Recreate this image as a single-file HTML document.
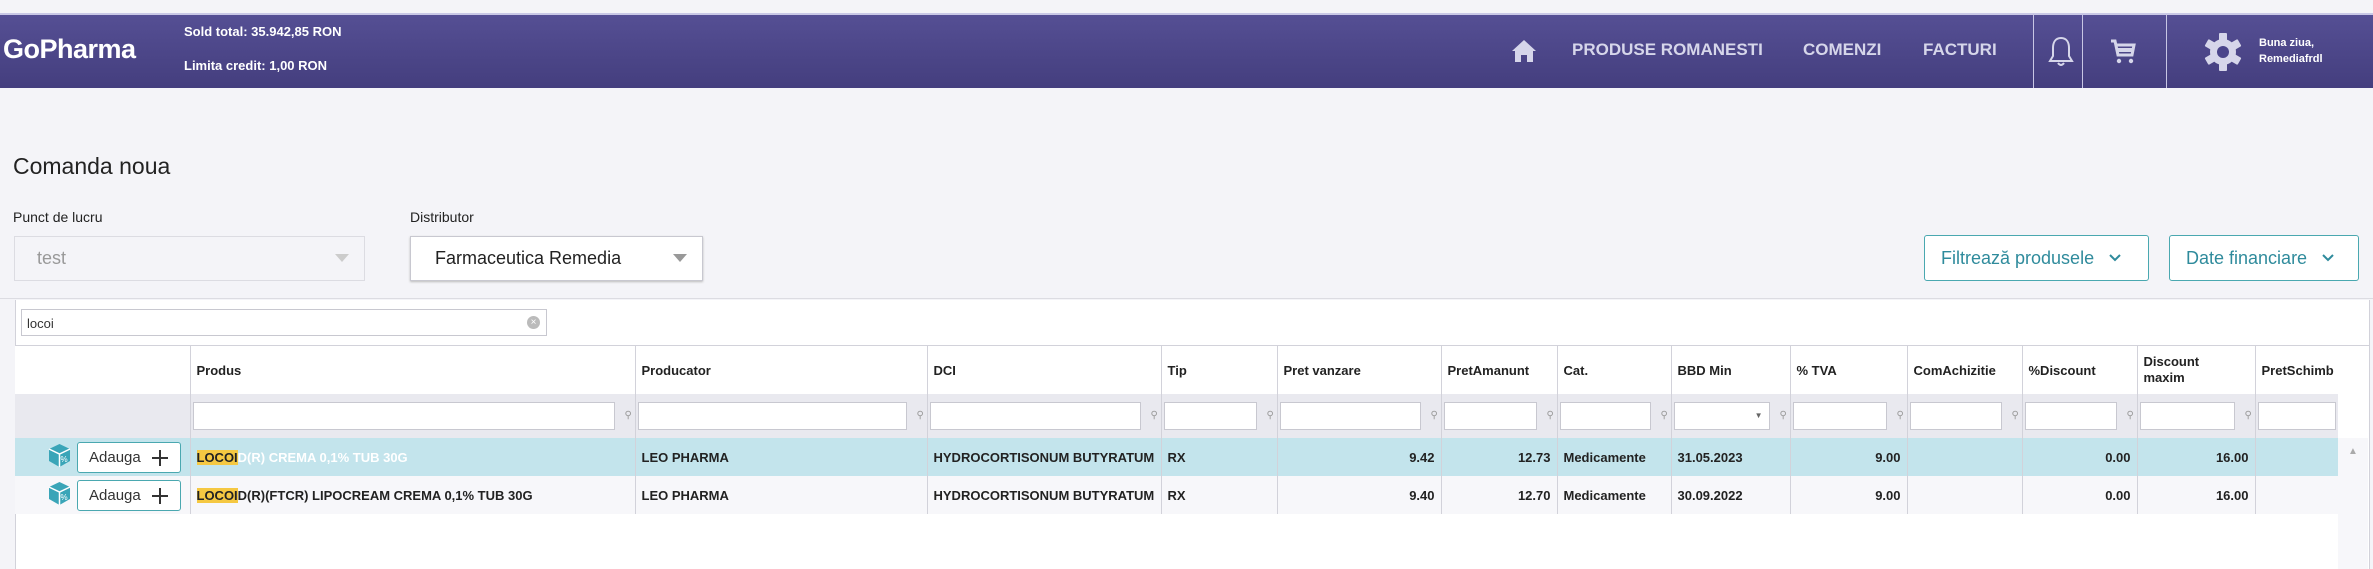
<!DOCTYPE html>
<html><head><meta charset="utf-8"><style>
*{box-sizing:border-box;margin:0;padding:0}
body{width:2373px;height:569px;overflow:hidden;background:#f4f4f8;font-family:"Liberation Sans",Arial,sans-serif;position:relative}
.a{position:absolute}
.hdr{left:0;top:13px;width:2373px;height:75px;background:linear-gradient(#554f94,#443e7e);border-top:2px solid #c9c8e6}
.nav{color:#d6d6ea;font-size:17px;font-weight:bold;top:40px}
.sep{top:13px;width:1px;height:75px;background:#c8c6e4}
.btn{border:1.5px solid #4aa8b0;background:#fff;border-radius:3px;color:#2f8b9c;font-size:18px;display:flex;align-items:center;padding-left:16px}
table{border-collapse:collapse;table-layout:fixed;font-size:13px;font-weight:bold;color:#222}
td{border-left:1px solid #d2d2da;padding:0 6px;white-space:nowrap;overflow:hidden}
td:first-child{border-left:none}
tr.h td{height:48px;background:#fff;font-size:13px}
tr.f td{height:44px;background:#e9e9ef;padding:0 2px;position:relative}
.inp{height:28px;width:calc(100% - 18px);background:#fff;border:1px solid #c8c8d0}
.pin{position:absolute;right:5px;top:16px;width:5px;height:10px;color:#999;font-size:10px;font-weight:normal}
tr.r td{height:38px}
tr.r1 td{background:#c3e4ec}
tr.r2 td{background:#f7f7fa}
.n{text-align:right}
.hl{background:#f5c842}
</style></head><body>
<div class="a hdr"></div>
<div class="a" style="left:3px;top:34px;font-size:27px;font-weight:bold;color:#fff;letter-spacing:-0.5px">GoPharma</div>
<div class="a" style="left:184px;top:24px;font-size:13px;font-weight:bold;color:#fff">Sold total: 35.942,85 RON</div>
<div class="a" style="left:184px;top:58px;font-size:13px;font-weight:bold;color:#fff">Limita credit: 1,00 RON</div>
<svg class="a" style="left:1512px;top:40px" width="24" height="22" viewBox="0 0 24 22"><path d="M12 0 L24 11 L21 11 L21 22 L15 22 L15 15 L9 15 L9 22 L3 22 L3 11 L0 11 Z" fill="#d6d6ea"/></svg>
<div class="a nav" style="left:1572px">PRODUSE ROMANESTI</div>
<div class="a nav" style="left:1803px">COMENZI</div>
<div class="a nav" style="left:1923px">FACTURI</div>
<div class="a sep" style="left:2033px"></div><div class="a sep" style="left:2082px"></div><div class="a sep" style="left:2166px"></div>
<svg class="a" style="left:2047px;top:36px" width="28" height="32" viewBox="0 0 28 32"><path d="M14 2 C8 2 6 7 6 12 L6 20 L3 25 L25 25 L22 20 L22 12 C22 7 20 2 14 2 Z M11 27 Q14 31 17 27" fill="none" stroke="#d6d6ea" stroke-width="2"/></svg>
<svg class="a" style="left:2110px;top:39px" width="26" height="26" viewBox="0 0 26 26"><path d="M1 2 L5 2 L8 16 L22 16 L24 6 L6 6" fill="none" stroke="#d6d6ea" stroke-width="3"/><rect x="8" y="9" width="14" height="4" fill="#d6d6ea"/><circle cx="9" cy="22" r="2.2" fill="#d6d6ea"/><circle cx="21" cy="22" r="2.2" fill="#d6d6ea"/></svg>
<svg class="a" style="left:2203px;top:32px" width="40" height="40" viewBox="0 0 40 40"><g fill="#d6d6ea"><circle cx="20" cy="20" r="13"/><rect x="16" y="1" width="8" height="38" rx="1"/><rect x="16" y="1" width="8" height="38" rx="1" transform="rotate(60 20 20)"/><rect x="16" y="1" width="8" height="38" rx="1" transform="rotate(120 20 20)"/></g><circle cx="20" cy="20" r="6" fill="#4a448a"/></svg>
<div class="a" style="left:2259px;top:35px;font-size:11px;font-weight:bold;color:#fff;line-height:16px">Buna ziua,<br>Remediafrdl</div>

<div class="a" style="left:13px;top:153px;font-size:23px;color:#222">Comanda noua</div>
<div class="a" style="left:13px;top:209px;font-size:14px;color:#222">Punct de lucru</div>
<div class="a" style="left:410px;top:209px;font-size:14px;color:#222">Distributor</div>
<div class="a" style="left:14px;top:236px;width:351px;height:45px;border:1px solid #dcdce2;background:#f4f4f8;color:#999;font-size:18px;padding:11px 22px">test<span style="position:absolute;right:15px;top:17px;border:7px solid transparent;border-top:8px solid #ccc"></span></div>
<div class="a" style="left:410px;top:236px;width:293px;height:45px;border:1px solid #c8c8d0;background:#fff;color:#222;font-size:18px;padding:11px 24px;box-shadow:0 1px 2px #bbb">Farmaceutica Remedia<span style="position:absolute;right:15px;top:17px;border:7px solid transparent;border-top:8px solid #999"></span></div>
<div class="a btn" style="left:1924px;top:235px;width:225px;height:46px">Filtrează produsele <svg style="margin-left:14px" width="14" height="10" viewBox="0 0 14 10"><path d="M2 2 L7 7 L12 2" stroke="#2f8b9c" stroke-width="2" fill="none"/></svg></div>
<div class="a btn" style="left:2169px;top:235px;width:190px;height:46px">Date financiare <svg style="margin-left:14px" width="14" height="10" viewBox="0 0 14 10"><path d="M2 2 L7 7 L12 2" stroke="#2f8b9c" stroke-width="2" fill="none"/></svg></div>
<div class="a" style="left:0;top:298px;width:2373px;height:1px;background:#dcdce2"></div>

<div class="a" style="left:15px;top:300px;width:2355px;height:269px;background:#fff;border-left:1px solid #d2d2da;border-right:1px solid #d2d2da"></div>
<div class="a" style="left:21px;top:309px;width:526px;height:27px;border:1px solid #c8c8d0;background:#fff;font-size:13px;color:#333;padding:6px 5px">locoi<span style="position:absolute;right:6px;top:6px;width:13px;height:13px;border-radius:50%;background:#bbb;color:#fff;font-size:10px;line-height:13px;text-align:center">×</span></div>
<div class="a" style="left:15px;top:345px;width:2355px;height:1px;background:#d2d2da"></div>

<table class="a" style="left:15px;top:346px;width:2323px">
<colgroup><col style="width:175px"><col style="width:445px"><col style="width:292px"><col style="width:234px"><col style="width:116px"><col style="width:164px"><col style="width:116px"><col style="width:114px"><col style="width:119px"><col style="width:117px"><col style="width:115px"><col style="width:115px"><col style="width:118px"><col style="width:83px"></colgroup>
<tr class="h"><td></td><td>Produs</td><td>Producator</td><td>DCI</td><td>Tip</td><td>Pret vanzare</td><td>PretAmanunt</td><td>Cat.</td><td>BBD Min</td><td>% TVA</td><td>ComAchizitie</td><td>%Discount</td><td style="line-height:16px">Discount<br>maxim</td><td>PretSchimb</td></tr>
<tr class="f"><td></td>
<td><div class="inp"></div><span class="pin">⚲</span></td><td><div class="inp"></div><span class="pin">⚲</span></td><td><div class="inp"></div><span class="pin">⚲</span></td><td><div class="inp"></div><span class="pin">⚲</span></td><td><div class="inp"></div><span class="pin">⚲</span></td><td><div class="inp"></div><span class="pin">⚲</span></td><td><div class="inp"></div><span class="pin">⚲</span></td><td><div class="inp" style="text-align:right;font-size:8px;padding:8px 6px;color:#666">▼</div><span class="pin">⚲</span></td><td><div class="inp"></div><span class="pin">⚲</span></td><td><div class="inp"></div><span class="pin">⚲</span></td><td><div class="inp"></div><span class="pin">⚲</span></td><td><div class="inp"></div><span class="pin">⚲</span></td><td><div class="inp" style="width:100%"></div></td></tr>
<tr class="r r1"><td></td><td><span class="hl">LOCOI</span><span style="color:#fff">D(R) CREMA 0,1% TUB 30G</span></td><td>LEO PHARMA</td><td>HYDROCORTISONUM BUTYRATUM</td><td>RX</td><td class="n">9.42</td><td class="n">12.73</td><td>Medicamente</td><td>31.05.2023</td><td class="n">9.00</td><td></td><td class="n">0.00</td><td class="n">16.00</td><td></td></tr>
<tr class="r r2"><td></td><td><span class="hl">LOCOI</span>D(R)(FTCR) LIPOCREAM CREMA 0,1% TUB 30G</td><td>LEO PHARMA</td><td>HYDROCORTISONUM BUTYRATUM</td><td>RX</td><td class="n">9.40</td><td class="n">12.70</td><td>Medicamente</td><td>30.09.2022</td><td class="n">9.00</td><td></td><td class="n">0.00</td><td class="n">16.00</td><td></td></tr>
</table>
<div class="a" style="left:2338px;top:438px;width:30px;height:131px;background:#f7f7fa;color:#aaa;font-size:10px;text-align:center;padding-top:8px">▲</div>

<svg class="a" style="left:47px;top:443px" width="25" height="25" viewBox="0 0 25 25"><path d="M12.5 1 L23 6 L23 18 L12.5 24 L2 18 L2 6 Z" fill="#3aa5b8"/><path d="M2 6 L12.5 11 L23 6 M12.5 11 L12.5 24" stroke="#fff" stroke-width="1.5" fill="none"/><text x="17" y="19" font-size="8" fill="#fff" text-anchor="middle" font-family="Liberation Sans">%</text></svg>
<svg class="a" style="left:47px;top:481px" width="25" height="25" viewBox="0 0 25 25"><path d="M12.5 1 L23 6 L23 18 L12.5 24 L2 18 L2 6 Z" fill="#3aa5b8"/><path d="M2 6 L12.5 11 L23 6 M12.5 11 L12.5 24" stroke="#fff" stroke-width="1.5" fill="none"/><text x="17" y="19" font-size="8" fill="#fff" text-anchor="middle" font-family="Liberation Sans">%</text></svg>
<div class="a" style="left:77px;top:442px;width:104px;height:31px;border:1.5px solid #4aa8b0;border-radius:3px;background:#fff;font-size:15px;color:#333;padding:6px 0 0 11px">Adauga<svg style="position:absolute;left:73px;top:6px" width="18" height="18" viewBox="0 0 18 18"><path d="M9 1 V17 M1 9 H17" stroke="#333" stroke-width="2"/></svg></div>
<div class="a" style="left:77px;top:480px;width:104px;height:31px;border:1.5px solid #4aa8b0;border-radius:3px;background:#fff;font-size:15px;color:#333;padding:6px 0 0 11px">Adauga<svg style="position:absolute;left:73px;top:6px" width="18" height="18" viewBox="0 0 18 18"><path d="M9 1 V17 M1 9 H17" stroke="#333" stroke-width="2"/></svg></div>
</body></html>
